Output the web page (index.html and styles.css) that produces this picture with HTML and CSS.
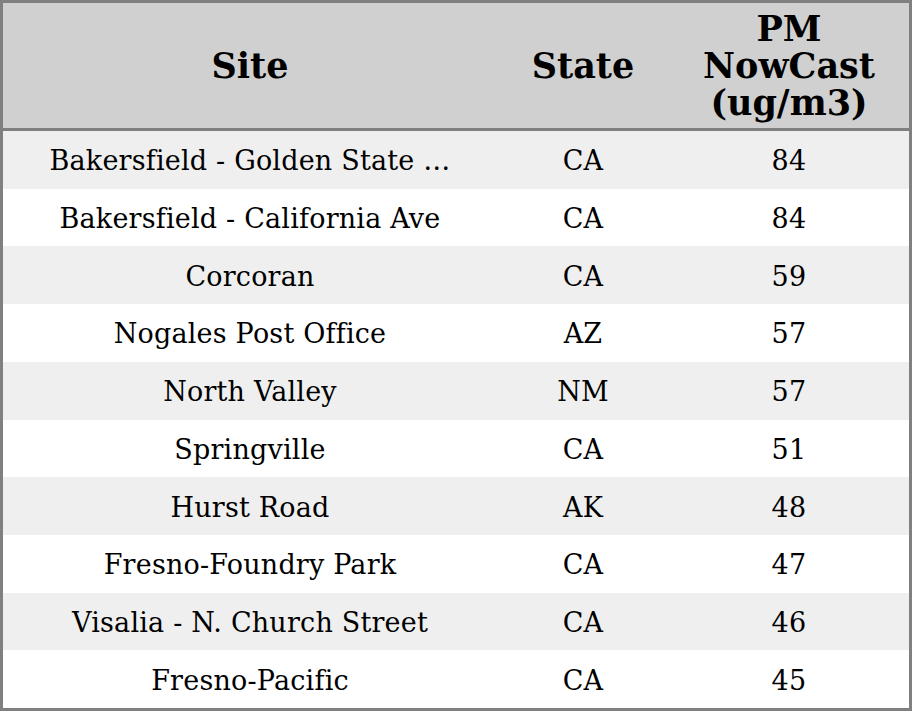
FILE: index.html
```html
<!DOCTYPE html>
<html>
<head>
<meta charset="utf-8">
<link rel="stylesheet" href="styles.css">
</head>
<body>
<div class="table">
  <div class="head">
    <div class="cell">Site</div>
    <div class="cell">State</div>
    <div class="cell">PM<br>NowCast<br>(ug/m3)</div>
  </div>
  <div class="body">
    <div class="row"><div class="cell">Bakersfield - Golden State …</div><div class="cell">CA</div><div class="cell">84</div></div>
    <div class="row"><div class="cell">Bakersfield - California Ave</div><div class="cell">CA</div><div class="cell">84</div></div>
    <div class="row"><div class="cell">Corcoran</div><div class="cell">CA</div><div class="cell">59</div></div>
    <div class="row"><div class="cell">Nogales Post Office</div><div class="cell">AZ</div><div class="cell">57</div></div>
    <div class="row"><div class="cell">North Valley</div><div class="cell">NM</div><div class="cell">57</div></div>
    <div class="row"><div class="cell">Springville</div><div class="cell">CA</div><div class="cell">51</div></div>
    <div class="row"><div class="cell">Hurst Road</div><div class="cell">AK</div><div class="cell">48</div></div>
    <div class="row"><div class="cell">Fresno-Foundry Park</div><div class="cell">CA</div><div class="cell">47</div></div>
    <div class="row"><div class="cell">Visalia - N. Church Street</div><div class="cell">CA</div><div class="cell">46</div></div>
    <div class="row"><div class="cell">Fresno-Pacific</div><div class="cell">CA</div><div class="cell">45</div></div>
  </div>
</div>
</body>
</html>
```
FILE: styles.css
```css
html, body {
  margin: 0;
  padding: 0;
  background: #ffffff;
}
.table {
  width: 912px;
  height: 711px;
  box-sizing: border-box;
  border: 3px solid #808080;
  display: flex;
  flex-direction: column;
  font-family: "DejaVu Serif", serif;
  color: #000;
}
.head, .row {
  display: grid;
  grid-template-columns: 494px 172px 1fr;
}
.head {
  height: 125px;
  background: #d0d0d0;
  border-bottom: 3px solid #808080;
  font-weight: bold;
  font-size: 35px;
  line-height: 37px;
}
.body {
  flex: 1;
  display: flex;
  flex-direction: column;
}
.row {
  flex: 1;
  font-size: 27px;
  letter-spacing: 0.2px;
  padding-top: 2px;
}
.row:nth-child(odd) {
  background: #efefef;
}
.cell {
  display: flex;
  align-items: center;
  justify-content: center;
  text-align: center;
  white-space: nowrap;
}
```
